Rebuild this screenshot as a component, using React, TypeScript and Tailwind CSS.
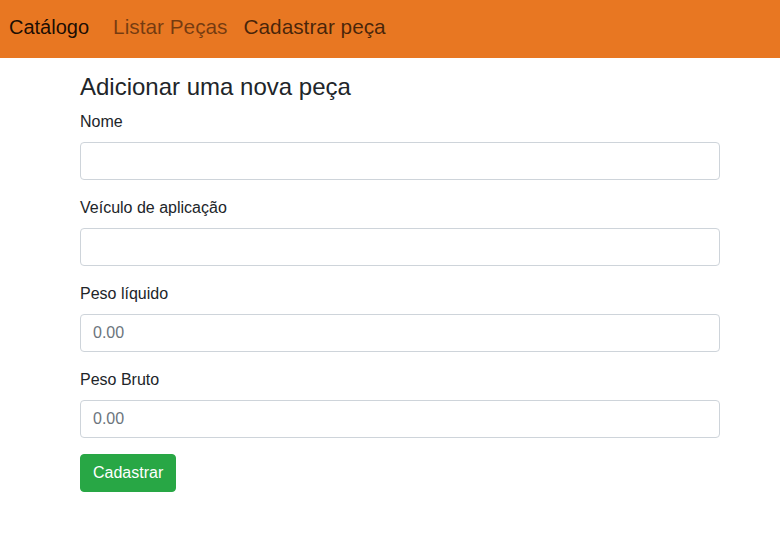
import React, { useState } from 'react';

const fields = [
    { label: 'Nome', placeholder: '' },
    { label: 'Veículo de aplicação', placeholder: '' },
    { label: 'Peso líquido', placeholder: '0.00' },
    { label: 'Peso Bruto', placeholder: '0.00' },
];

const App: React.FC = () => {
    const [values, setValues] = useState<string[]>(fields.map(() => ''));

    return (
        <div className="min-h-screen bg-white text-[#212529] font-['Liberation_Sans',Arial,sans-serif]">
            {/* Top navbar */}
            <nav className="h-[58px] bg-[#e87722] flex items-baseline pt-[12px] pl-[9px] leading-[30px]">
                <a href="#" className="text-[20px] text-[rgba(0,0,0,0.9)] mr-[24px]">Catálogo</a>
                <div className="flex items-baseline gap-[16px] text-[20.8px]">
                    <a href="#" className="text-[rgba(0,0,0,0.5)]">Listar Peças</a>
                    <a href="#" className="text-[rgba(0,0,0,0.7)]">Cadastrar peça</a>
                </div>
            </nav>

            {/* Form */}
            <div className="w-[640px] ml-[80px] pt-[15px]">
                <h4 className="text-[24px] leading-[28.8px] mb-2">Adicionar uma nova peça</h4>
                <form onSubmit={(e) => e.preventDefault()}>
                    {fields.map((field, i) => (
                        <div key={field.label} className="mb-4">
                            <label className="block text-base leading-6 mb-2">{field.label}</label>
                            <input
                                type="text"
                                value={values[i]}
                                placeholder={field.placeholder}
                                onChange={(e) => {
                                    const next = [...values];
                                    next[i] = e.target.value;
                                    setValues(next);
                                }}
                                className="block w-full h-[38px] px-3 py-1.5 text-base leading-6 border border-[#ced4da] rounded-[4px] placeholder-[#6c757d] focus:outline-none"
                            />
                        </div>
                    ))}
                    <button
                        type="submit"
                        className="h-[38px] px-3 text-base leading-6 text-white bg-[#28a745] border border-[#28a745] rounded-[4px]"
                    >
                        Cadastrar
                    </button>
                </form>
            </div>
        </div>
    );
};

export default App;
